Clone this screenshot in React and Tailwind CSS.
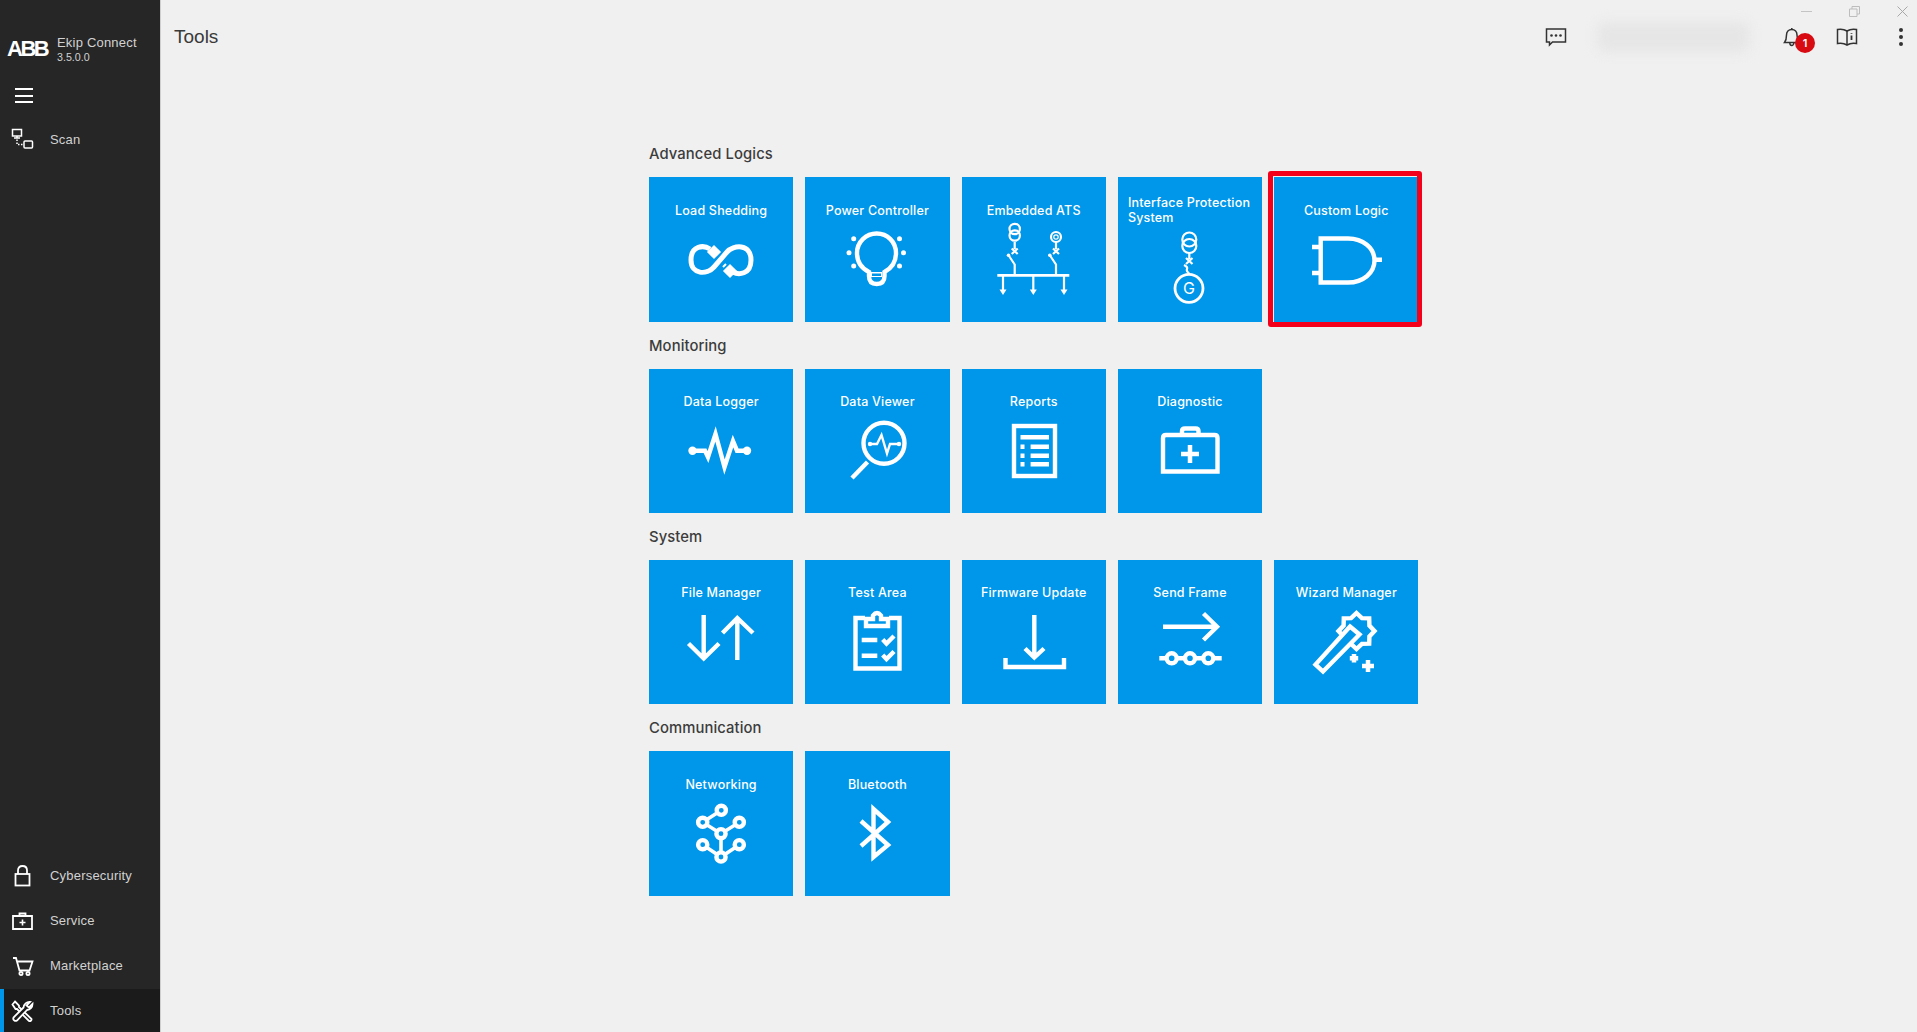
import React from 'react';

const BLUE = '#0096E9';

// eight pointed gear used by the wizard wand
const starPoints = Array.from({ length: 16 }, (_, i) => {
  const r = i % 2 === 0 ? 18 : 14;
  const a = (Math.PI / 8) * i - Math.PI / 2;
  return `${(82.5 + r * Math.cos(a)).toFixed(1)},${(71 + r * Math.sin(a)).toFixed(1)}`;
}).join(' ');

const LoadShedding = () => (
  <g strokeWidth="5">
    <path d="M61 72 C55 68 42 68 42 83 C42 98 58 98 65 90 L78 75 C84 68 102 66 102 83 C102 98 89 98 84 95" />
    <rect x="60" y="70" width="10" height="10" fill="#fff" stroke="none" transform="rotate(45 65 75)" />
    <rect x="76" y="89" width="10" height="10" fill="#fff" stroke="none" transform="rotate(45 81 94)" />
    <path d="M77 87 L74 90 M82 90 L77 95" strokeWidth="2" />
  </g>
);

const Bulb = () => (
  <g>
    <path d="M64 99 V95 C56 91 52 84 52 76 C52 65 61 56.5 71.7 56.5 C82.5 56.5 91 65 91 76 C91 84 87 91 79.5 95 V99 Q79.5 107 71.7 107 Q64 107 64 99 Z" />
    <rect x="66" y="95" width="11" height="5" fill="#fff" stroke="none" />
    <rect x="67" y="96.5" width="9" height="2.5" fill={BLUE} stroke="none" />
    {[[48.7, 61.7], [94.5, 61.7], [44, 75.7], [98.5, 75.7], [48.7, 89], [94.5, 89]].map(([cx, cy]) => (
      <circle key={cx + '-' + cy} cx={cx} cy={cy} r="2.5" fill="#fff" stroke="none" />
    ))}
  </g>
);

const Switch = ({ x }) => (
  <g>
    <path d={`M${x} 65 V72 M${x - 3} 71.5 L${x + 3} 77 M${x + 3} 71.5 L${x - 3} 77`} />
    <path d={`M${x - 6} 78.5 L${x} 87.5 V98`} />
    <circle cx={x - 6.2} cy={78.2} r="1.8" fill="#fff" stroke="none" />
  </g>
);

const Ats = () => (
  <g strokeWidth="2.2">
    <circle cx="52.7" cy="52" r="5.2" />
    <circle cx="52.7" cy="58.5" r="5.2" />
    <circle cx="94" cy="60" r="5" />
    <circle cx="94" cy="60" r="2.2" strokeWidth="1.2" />
    <Switch x={52.7} />
    <Switch x={94} />
    <path d="M35.3 98.3 H107.3" strokeWidth="2.8" />
    {[41, 71.3, 102].map((x) => (
      <g key={x}>
        <path d={`M${x} 98 V113`} />
        <path d={`M${x - 3.5} 112.5 H${x + 3.5} L${x} 118 Z`} fill="#fff" stroke="none" />
      </g>
    ))}
  </g>
);

const Interface = () => (
  <g strokeWidth="2.2">
    <circle cx="71.3" cy="62.5" r="7" />
    <circle cx="71.3" cy="69" r="7" />
    <path d="M71.3 76 V82 M68 81 L74.5 87 M74.5 81 L68 87" />
    <path d="M66 88 Q70 90 69 92 Q68 94 71.5 97" />
    <circle cx="71" cy="111.3" r="14" strokeWidth="2.8" />
    <text x="71" y="117" textAnchor="middle" fill="#fff" stroke="none" fontSize="16" fontFamily="Inter, sans-serif">G</text>
  </g>
);

const LogicGate = () => (
  <g>
    <path d="M46.7 61.5 H74 C89 61.5 100.5 71 100.5 83.5 C100.5 96 89 105.5 74 105.5 H46.7 Z" />
    <path d="M38 70 H47 M38 96 H47 M100 82.7 H108" />
  </g>
);

const DataLogger = () => (
  <g>
    <circle cx="43.5" cy="81.7" r="4.2" fill="#fff" stroke="none" />
    <circle cx="98" cy="81.7" r="4.2" fill="#fff" stroke="none" />
    <path d="M44 81.7 H56 L59 88 L66.5 65 L75.5 98 L84 72 L88 81.7 H98" strokeLinejoin="miter" />
  </g>
);

const DataViewer = () => (
  <g>
    <circle cx="79" cy="74.3" r="20.5" />
    <path d="M62.5 93 L47 109" />
    <path d="M65 75 H72 L76.5 66 L82 84.5 L85 75 H94" strokeWidth="2.4" />
    <circle cx="65" cy="75" r="2.2" fill="#fff" stroke="none" />
    <circle cx="94" cy="75" r="2.2" fill="#fff" stroke="none" />
  </g>
);

const Reports = () => (
  <g>
    <rect x="52" y="57" width="41" height="50" />
    <path d="M58.5 68.3 H87 M68.6 77.7 H87 M68.6 86.7 H87 M68.6 95.3 H87" strokeWidth="4.4" />
    <path d="M58.5 77.7 H62.5 M58.5 86.7 H62.5 M58.5 95.3 H62.5" strokeWidth="4.4" />
  </g>
);

const Diagnostic = () => (
  <g>
    <path d="M45 102.5 V69 Q45 66 48 66 H96.5 Q99.5 66 99.5 69 V102.5 Z" />
    <path d="M64 65 V62 Q64 59.5 67 59.5 H77.5 Q80.5 59.5 80.5 62 V65" />
    <path d="M72 76 V94 M63 85 H81" strokeWidth="4.5" />
  </g>
);

const FileManager = () => (
  <path d="M54.7 55 V98 M39.5 83.5 L54.7 98.5 L70 83.5 M88.3 100 V58 M73.5 73 L88.3 58 L104 73" />
);

const TestArea = () => (
  <g>
    <path d="M60 58 H50.5 V108.5 H94.5 V58 H84" />
    <path d="M61 66 H83 V59 H76 V55.5 Q72 50.5 68 55.5 V59 H61 Z" />
    <path d="M56.7 80 H72.3 M56.7 95.7 H72.3" />
    <path d="M77.7 79.5 L81.5 83.5 L89 76 M77.7 95 L81.5 99 L89 91.5" />
  </g>
);

const Firmware = () => (
  <path d="M72.3 55 V97 M63 88.5 L72.3 97.5 L82 88.5 M43.5 98 V107 H102 V98" />
);

const SendFrame = () => (
  <g>
    <path d="M45 66.7 H99 M85.5 53.5 L99 66.7 L85.5 80" />
    <path d="M41.3 98.3 H103.7" />
    {[53.7, 72, 90.3].map((x) => (
      <circle key={x} cx={x} cy="98.3" r="5" fill={BLUE} />
    ))}
  </g>
);

const Wizard = () => (
  <g>
    <polygon points={starPoints} />
    <path d="M76 66.5 L85.5 74.5 L49 111.5 L41.5 104.5 Z" fill={BLUE} strokeLinejoin="miter" />
    <path d="M80 94 V102.5 M75.8 98.3 H84.2" strokeWidth="4.5" />
    <path d="M94 100 V112 M88 106 H100" strokeWidth="4.5" />
  </g>
);

const Networking = () => {
  const nodes = [[72.3, 59.3], [53.7, 71.3], [90.3, 71.3], [72, 82.7], [53.7, 93.7], [90.3, 93.7], [72, 106]];
  return (
    <g>
      <path d="M72.3 59.3 L53.7 71.3 L72 82.7 L90.3 71.3 M72 82.7 V106 M53.7 93.7 L72 106 L90.3 93.7" strokeWidth="3.6" />
      {nodes.map(([cx, cy]) => (
        <circle key={cx + '-' + cy} cx={cx} cy={cy} r="4.6" fill={BLUE} />
      ))}
    </g>
  );
};

const Bluetooth = () => (
  <path d="M56 70 L83 94 L68.5 106 V58 L83 71 L56 95" strokeLinejoin="miter" />
);

const sections = [
  {
    title: 'Advanced Logics',
    tiles: [
      { label: 'Load Shedding', Icon: LoadShedding },
      { label: 'Power Controller', Icon: Bulb },
      { label: 'Embedded ATS', Icon: Ats },
      { label: 'Interface Protection System', Icon: Interface, left: true },
      { label: 'Custom Logic', Icon: LogicGate, marked: true },
    ],
  },
  {
    title: 'Monitoring',
    tiles: [
      { label: 'Data Logger', Icon: DataLogger },
      { label: 'Data Viewer', Icon: DataViewer },
      { label: 'Reports', Icon: Reports },
      { label: 'Diagnostic', Icon: Diagnostic },
    ],
  },
  {
    title: 'System',
    tiles: [
      { label: 'File Manager', Icon: FileManager },
      { label: 'Test Area', Icon: TestArea },
      { label: 'Firmware Update', Icon: Firmware },
      { label: 'Send Frame', Icon: SendFrame },
      { label: 'Wizard Manager', Icon: Wizard },
    ],
  },
  {
    title: 'Communication',
    tiles: [
      { label: 'Networking', Icon: Networking },
      { label: 'Bluetooth', Icon: Bluetooth },
    ],
  },
];

const Tile = ({ label, Icon, left, marked }) => (
  <div className="relative w-[144.25px] h-[144.3px] bg-[#0096E9] text-white">
    <div
      className={`h-[44px] pt-[22px] flex items-center text-[12.5px] leading-[15px] font-medium tracking-[0.2px] ${
        left ? 'px-[10px] text-left' : 'justify-center text-center'
      }`}
    >
      <span>{label}</span>
    </div>
    <svg
      width="144"
      height="100"
      viewBox="0 44 144 100"
      fill="none"
      stroke="#fff"
      strokeWidth="4.4"
      className="overflow-visible"
    >
      <Icon />
    </svg>
    {marked && (
      <div className="absolute -left-[6px] -right-[3.5px] -top-[6px] -bottom-[5.5px] border-[5.5px] border-[#f5001a] rounded-[3px]" />
    )}
  </div>
);

const NavItem = ({ label, children, active, height = 'h-[45px]', shift = 'pt-[3px]' }) => (
  <div className={`relative flex items-center ${height} ${shift} ${active ? 'bg-[#1b1b1b]' : ''}`}>
    {active && <div className="absolute left-0 top-0 bottom-0 w-[4px] bg-[#0096E9]" />}
    <div className="w-[50px] pl-[10.5px]">{children}</div>
    <span className="text-[13px] text-[#d2d2d2] tracking-[0.2px] font-['Liberation_Sans',sans-serif]">{label}</span>
  </div>
);

const navIcon = { fill: 'none', stroke: '#fff', strokeWidth: 1.8 };

const Sidebar = () => (
  <aside className="w-[161px] shrink-0 h-full flex flex-col bg-[#262626] border-r-[1px] border-[#cfcfcf] font-['Liberation_Sans',sans-serif]">
    <div className="h-[74px] flex items-center pl-[7px] pt-[23px]">
      <div className="w-[50px] text-[22px] leading-none font-bold text-white tracking-[-2.5px]">ABB</div>
      <div className="text-[#d2d2d2] pt-[1px]">
        <div className="text-[13px] leading-[16px] tracking-[0.2px]">Ekip Connect</div>
        <div className="text-[10.7px] leading-[13px]">3.5.0.0</div>
      </div>
    </div>
    <div className="pl-[15px] pt-[14px] h-[47px]">
      <div className="w-[18px] flex flex-col gap-[4.6px]">
        <div className="h-[2px] bg-white" />
        <div className="h-[2px] bg-white" />
        <div className="h-[2px] bg-white" />
      </div>
    </div>
    <NavItem label="Scan" height="h-[38px]" shift="pt-0">
      <svg width="24" height="24" viewBox="0 0 24 24" {...navIcon} strokeWidth="1.5">
        <rect x="1.5" y="1.5" width="9" height="6.5" />
        <path d="M3 10 H9 M6 8 V10" />
        <path d="M6 11.5 V16.5 H12" strokeDasharray="1.5 1.5" />
        <rect x="13" y="13" width="8.5" height="7" rx="1" />
      </svg>
    </NavItem>
    <div className="mt-auto">
      <NavItem label="Cybersecurity">
        <svg width="24" height="24" viewBox="0 0 24 24" {...navIcon}>
          <rect x="4.5" y="10" width="14" height="11.5" />
          <path d="M7 10 V6.5 Q7 2 11.5 2 Q16 2 16 6.5 V10" />
        </svg>
      </NavItem>
      <NavItem label="Service">
        <svg width="24" height="24" viewBox="0 0 24 24" {...navIcon}>
          <path d="M2 20 V7 H21 V20 Z" />
          <path d="M8.5 7 V4.5 H14.5 V7" />
          <path d="M11.5 10.5 V16.5 M8.5 13.5 H14.5" strokeWidth="1.6" />
        </svg>
      </NavItem>
      <NavItem label="Marketplace" height="h-[45px] mb-[2px]">
        <svg width="24" height="24" viewBox="0 0 24 24" {...navIcon}>
          <path d="M2 4 H5 L8.5 16.5 H18.5 L21.5 7.5 H6" />
          <circle cx="10" cy="19.5" r="1.6" />
          <circle cx="17" cy="19.5" r="1.6" />
        </svg>
      </NavItem>
      <NavItem label="Tools" active height="h-[43px]" shift="pt-[1px]">
        <svg width="24" height="24" viewBox="0 0 24 24" {...navIcon}>
          <path d="M4 2.5 L8 6.5 V8 L20.5 20 A1.8 1.8 0 0 1 18 22 L6 10 H4.5 L1.5 5.5 Z" />
          <path d="M21.5 5 L18 8.5 L15.5 6.5 L19 3 A6 6 0 0 0 12.5 8.5 L2.5 18.5 A2.4 2.4 0 0 0 6 21.5 L16 11 A6 6 0 0 0 21.5 5 Z" fill="#1b1b1b" />
        </svg>
      </NavItem>
    </div>
  </aside>
);

const TopBar = () => (
  <div className="h-[74px] flex items-center pl-[13px] relative">
    <h1 className="text-[19px] pt-[1px] text-[#3a3a3a] font-['Liberation_Sans',sans-serif]">Tools</h1>
    <div className="ml-auto flex items-center h-full">
      <svg width="22" height="20" viewBox="0 0 22 20" fill="none" stroke="#333" strokeWidth="1.5" className="mr-[30px]">
        <path d="M1.5 2 H20.5 V15 H7.5 L4.5 18 V15 H1.5 Z" />
        <circle cx="6.5" cy="8.5" r="1.3" fill="#333" stroke="none" />
        <circle cx="11" cy="8.5" r="1.3" fill="#333" stroke="none" />
        <circle cx="15.5" cy="8.5" r="1.3" fill="#333" stroke="none" />
      </svg>
      <div className="w-[153px] h-[30px] rounded-[8px] bg-[#e6e6e6] blur-[6px] mr-[32.7px]" />
      <div className="relative w-[18px] mr-[35px]">
        <svg width="18" height="20" viewBox="0 0 18 20" fill="none" stroke="#333" strokeWidth="1.5" className="block">
          <path d="M1.5 15.5 H16 C14 13 14 11 14 8 C14 5 12 2.5 8.8 2.5 C5.5 2.5 3.5 5 3.5 8 C3.5 11 3.5 13 1.5 15.5 Z" />
          <path d="M8.8 1 V2.5 M6.8 16 Q7 18.5 8.8 18.5 Q10.5 18.5 10.8 16" />
        </svg>
        <div className="absolute left-[12px] top-[6px] w-[20px] h-[20px] rounded-full bg-[#d90b12] text-white text-[11px] font-semibold flex items-center justify-center">
          1
        </div>
      </div>
      <svg width="22" height="20" viewBox="0 0 22 20" fill="none" stroke="#333" strokeWidth="1.5" className="mr-[41px]">
        <path d="M11 4 Q7 1.5 1.5 2.5 V16.5 Q7 15.5 11 18 Q15 15.5 20.5 16.5 V2.5 Q15 1.5 11 4 Z" />
        <path d="M11 4 V18" />
        <path d="M15.5 6 V6.8 M15.5 8.5 V13" strokeWidth="1.8" />
      </svg>
      <div className="flex flex-col gap-[3px] mr-[14px]">
        <div className="w-[4px] h-[4px] rounded-full bg-[#333]" />
        <div className="w-[4px] h-[4px] rounded-full bg-[#333]" />
        <div className="w-[4px] h-[4px] rounded-full bg-[#333]" />
      </div>
    </div>
    {/* window controls */}
    <div className="absolute top-[6px] right-[9.5px] flex items-center gap-[37px]">
      <div className="w-[11px] h-[1px] bg-[#c4c4c4]" />
      <svg width="11" height="11" viewBox="0 0 11 11" fill="none" stroke="#bdbdbd" strokeWidth="1">
        <path d="M0.5 3 H8 V10.5 H0.5 Z M3 3 V0.5 H10.5 V8 H8" />
      </svg>
      <svg width="11" height="11" viewBox="0 0 11 11" fill="none" stroke="#a8a8a8" strokeWidth="1">
        <path d="M0.5 0.5 L10.5 10.5 M10.5 0.5 L0.5 10.5" />
      </svg>
    </div>
  </div>
);

export default function App() {
  return (
    <div className="flex w-full h-[1032px] overflow-hidden bg-[#f0f0f0] font-['Inter',sans-serif]">
      <Sidebar />
      <main className="flex-1 min-w-0">
        <TopBar />
        <div className="pt-[56.4px] pl-[488px]">
          {sections.map((section) => (
            <section key={section.title}>
              <h2 className="h-[47px] pt-[1px] flex items-center text-[14.8px] font-medium text-[#3c3c3c] tracking-[0.1px]">
                {section.title}
              </h2>
              <div className="flex gap-[12.05px]">
                {section.tiles.map((tile) => (
                  <Tile key={tile.label} {...tile} />
                ))}
              </div>
            </section>
          ))}
        </div>
      </main>
    </div>
  );
}
